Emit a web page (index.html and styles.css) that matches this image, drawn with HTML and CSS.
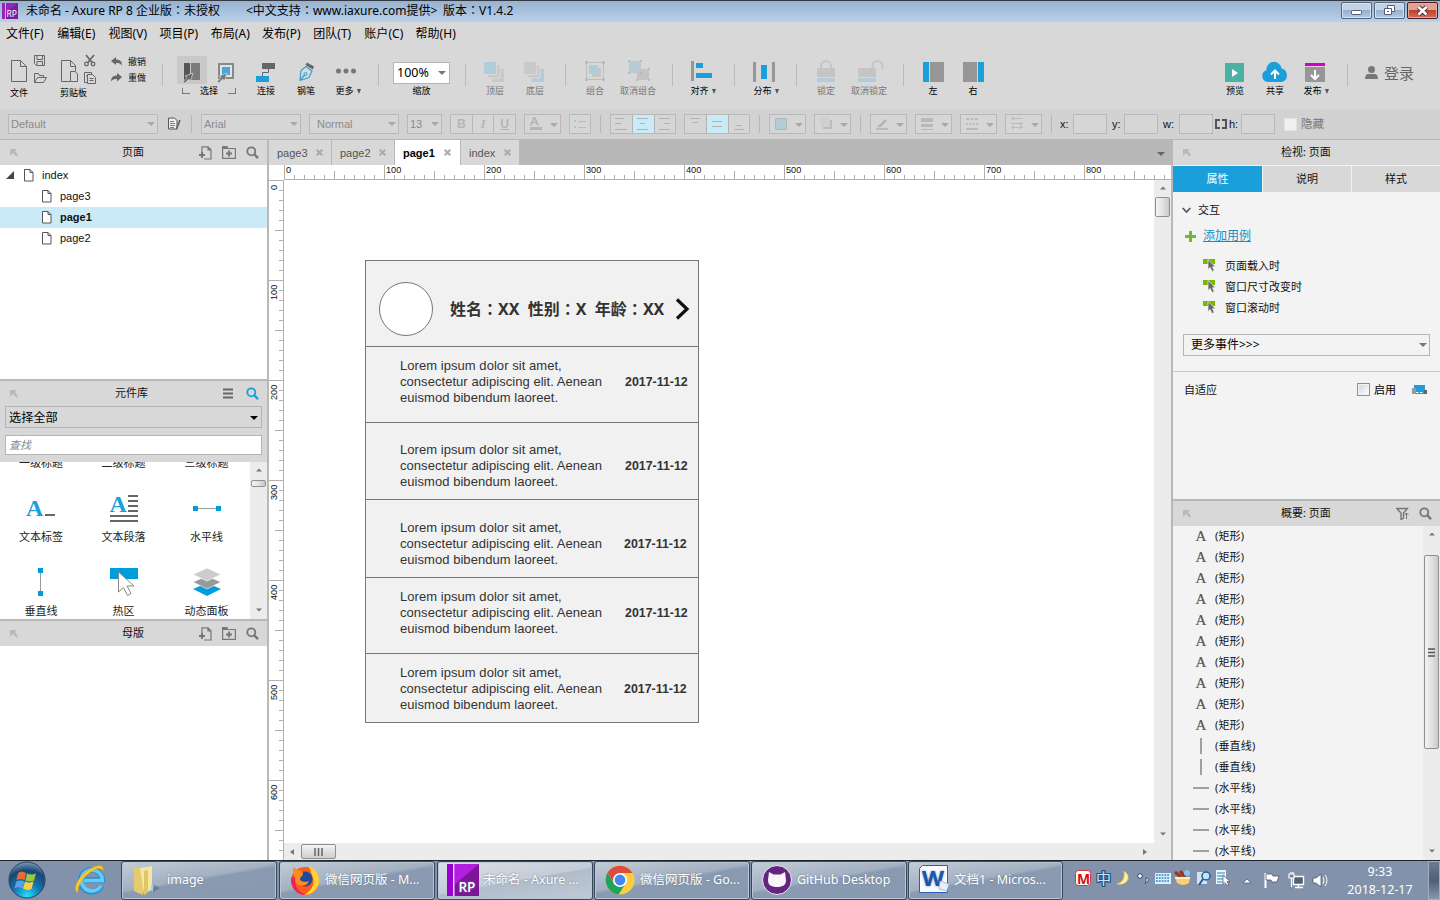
FILE: index.html
```
<!DOCTYPE html>
<html lang="zh-CN">
<head>
<meta charset="utf-8">
<title>未命名 - Axure RP 8</title>
<link rel="stylesheet" href="styles.css">
</head>
<body>
<svg class="defs" width="0" height="0">
  <symbol id="pin" viewBox="0 0 9 9"><path d="M1 8V1h7L6 3l3 4-1.500 1.500L4 5z" fill="#b9b9b9"/></symbol>
  <symbol id="doc" viewBox="0 0 10 13"><path d="M.5.5h5.500l3 3v8.500h-8.500zM6 .5v3h3" fill="#fff" stroke="#555"/></symbol>
  <symbol id="addpage" viewBox="0 0 13 14"><path d="M3 6V.8h6l3 3V13H5M9 .8v3h3" fill="none" stroke="#777" stroke-width="1.200"/><path d="M0 9h6M3 6v6" stroke="#777" stroke-width="2"/></symbol>
  <symbol id="addfolder" viewBox="0 0 15 13"><path d="M.6 2.500h12.800v9.900H.6zM.6 2V.6h4.500V2" fill="none" stroke="#777" stroke-width="1.200"/><path d="M4 7.500h6M7 4.500v6" stroke="#777" stroke-width="2"/><path d="M0 0h5v3H0z" fill="#777"/></symbol>
  <symbol id="mag" viewBox="0 0 13 13"><circle cx="5.300" cy="5.300" r="4" fill="none" stroke="currentColor" stroke-width="1.800"/><path d="M8 8l4 4.200" stroke="currentColor" stroke-width="2.400"/></symbol>
  <symbol id="evt" viewBox="0 0 13 13"><path d="M0 0h12v5H0z" fill="#76b900"/><path d="M5 .5v10l2.200-2L9 12.500l2.300-1-1.800-3.800h3z" fill="#666" stroke="#f3f3f3" stroke-width=".7"/></symbol>
  <symbol id="up" viewBox="0 0 8 4"><path d="M0 4l4-4 4 4z" fill="#777"/></symbol>
  <symbol id="down" viewBox="0 0 8 4"><path d="M0 0h8L4 4z" fill="currentColor"/></symbol>
</svg>

<div class="titlebar">
  <svg class="logo" width="16" height="16" viewBox="0 0 16 16"><path d="M0 0h16v16H0z" fill="#9726b8"/><path d="M3 0h1v16H3z" fill="#d9a5e6"/><path d="M4 9L16 0v16H4z" fill="#7d1b9d"/><text x="4.500" y="14" font-size="8.500" fill="#fff">RP</text></svg>
  <span class="title-a">未命名 - Axure RP 8 企业版<i lang="zh-TW">：</i>未授权</span>
  <span class="title-b">&lt;中文支持<i lang="zh-TW">：</i>www.iaxure.com提供&gt;</span>
  <span class="title-c">版本<i lang="zh-TW">：</i>V1.4.2</span>
  <div class="winbtns">
    <div class="winbtn"><svg width="29" height="15" viewBox="0 0 29 15"><rect x="9.500" y="7.500" width="10" height="4" rx="1" fill="#fff" stroke="#555f77"/></svg></div>
    <div class="winbtn"><svg width="29" height="15" viewBox="0 0 29 15"><path d="M12.500 2.500h7v6h-7z" fill="#fff" stroke="#555f77"/><path d="M9.500 5.500h7v6h-7z" fill="#fff" stroke="#555f77"/><path d="M12 8.500h2" stroke="#555f77"/></svg></div>
    <div class="winbtn close"><svg width="29" height="15" viewBox="0 0 29 15"><path d="M10.500 4l8 7.500M18.500 4l-8 7.500" stroke="#4b3a4c" stroke-width="4.500"/><path d="M10.500 4l8 7.500M18.500 4l-8 7.500" stroke="#fff" stroke-width="2.400"/></svg></div>
  </div>
</div>

<div class="menubar"><span>文件(F)</span><span>编辑(E)</span><span>视图(V)</span><span>项目(P)</span><span>布局(A)</span><span>发布(P)</span><span>团队(T)</span><span>账户(C)</span><span>帮助(H)</span></div>

<div class="toolbar">
  <div class="tool file"><svg width="56" height="33" viewBox="0 54 56 33"><path d="M11.500 60.500h9l6 6v15h-15zM20.500 60.500v6h6" fill="none" stroke="#666"/><path d="M34.500 55.500h10v10h-8l-2-2zM37 55.500v4h5.500v-4M37 65v-3.500h5.500V65" fill="none" stroke="#666"/><path d="M34.500 82.500v-9h4l1 2h4v2M34.500 82.500l3-5h9l-3 5z" fill="none" stroke="#666"/></svg><label>文件</label></div>
  <div class="tool clip"><svg width="48" height="33" viewBox="56 54 48 33"><path d="M70 81.500h-8.500v-21h9l5 5v6M70.500 60.500v6h5M70.500 71.500h4.500l2.500 2.500v7.500h-7z" fill="none" stroke="#666"/><path d="M86 55l6.500 8M94 55l-6.500 8" stroke="#666" stroke-width="1.700"/><circle cx="86.500" cy="64" r="1.800" fill="none" stroke="#666" stroke-width="1.300"/><circle cx="93" cy="64" r="1.800" fill="none" stroke="#666" stroke-width="1.300"/><path d="M87 82.500h-2.500v-10h7v2M87.500 74.500h5l3 3v6h-8zM89.500 78.500h4M89.500 80.500h4M86 76h1" fill="none" stroke="#666"/></svg><label>剪贴板</label></div>
  <div class="undo"><div><svg width="12" height="10" viewBox="0 0 12 10"><path d="M0 4l5-4v2.500c4 0 6 2 6 6-1.500-2-3-2.500-6-2.500V8z" fill="#666"/></svg>撤销</div><div><svg width="12" height="10" viewBox="0 0 12 10"><path d="M11 4L6 0v2.500c-4 0-6 2-6 6C1.500 6.500 3 6 6 6v2.500z" fill="#666"/></svg>重做</div></div>
  <b class="sep s0"></b>
  <div class="tool select"><svg width="78" height="31" viewBox="170 54 78 31"><path d="M177 56h30v28h-30z" fill="#c8c8c8"/><path d="M184 63h6v17h-6z" fill="#555"/><path d="M191 63h9v17h-9z" fill="#7b7b7b"/><path d="M193 73l-8 3 2.200 1.500-4.200 4 1.800 1.500 4-4 1.700 2z" fill="#666" stroke="#d8d8d8" stroke-width=".7"/><path d="M219 64h14v14h-14z" fill="#e2e2e2" stroke="#888" stroke-width="2"/><path d="M222 67h8v8h-8z" fill="#45a8d8"/><path d="M227 73l-8 3 2.200 1.500-4.200 4 1.800 1.500 4-4 1.700 2z" fill="#777" stroke="#d8d8d8" stroke-width=".7"/></svg><label><u class="bl"></u>选择<u class="br"></u></label></div>
  <div class="tool connect"><svg width="36" height="31" viewBox="248 54 36 31"><path d="M262 63h13v6h-13z" fill="#666"/><path d="M256 76h13v6h-13z" fill="#1b9fdb"/><path d="M268.500 69v3.500h-6V76" fill="none" stroke="#666"/></svg><label>连接</label></div>
  <div class="tool pen"><svg width="40" height="31" viewBox="286 54 40 31"><path d="M300 80.500l1-10 5-4 6 4.500-3 6.500zM300 80.500l5-6" fill="none" stroke="#35a2d3" stroke-width="1.200"/><circle cx="305.500" cy="74" r="1.500" fill="none" stroke="#35a2d3"/><path d="M307 62.500l7 4-1.200 3-7.300-4.500z" fill="#666"/></svg><label>钢笔</label></div>
  <div class="tool more"><svg width="40" height="31" viewBox="328 54 40 31"><circle cx="338.500" cy="71" r="2.500" fill="#777"/><circle cx="346" cy="71" r="2.500" fill="#777"/><circle cx="353.500" cy="71" r="2.500" fill="#777"/></svg><label>更多<em></em></label></div>
  <b class="sep s1"></b>
  <div class="tool zoom"><div class="zoombox"><span>100%</span><svg width="8" height="4"><use href="#down"/></svg></div><label>缩放</label></div>
  <b class="sep s2"></b>
  <div class="tool top off"><svg width="40" height="31" viewBox="475 54 40 31"><path d="M492 69h12v13h-12z" fill="#c9c9c9"/><path d="M488 65h12v13h-12z" fill="#c9c9c9" stroke="#d8d8d8"/><path d="M483.500 61.500h13v13h-13z" fill="#b0cdd9" stroke="#d8d8d8"/></svg><label>顶层</label></div>
  <div class="tool w40 off"><svg width="40" height="31" viewBox="515 54 40 31"><path d="M532 69h12v13h-12z" fill="#b0cdd9"/><path d="M528 65h12v13h-12z" fill="#c9c9c9" stroke="#d8d8d8"/><path d="M523.500 61.500h13v13h-13z" fill="#c9c9c9" stroke="#d8d8d8"/></svg><label>底层</label></div>
  <b class="sep s3"></b>
  <div class="tool group off"><svg width="40" height="31" viewBox="575 54 40 31"><path d="M586.500 62.500h17v17h-17z" fill="none" stroke="#bdbdbd"/><path d="M592 68h9v9h-9z" fill="#c5c5c5"/><path d="M589 65h9v9h-9z" fill="#b0cdd9"/><path d="M585 61h3v3h-3zM602 61h3v3h-3zM585 78h3v3h-3zM602 78h3v3h-3z" fill="#bdbdbd"/></svg><label>组合</label></div>
  <div class="tool ungroup off"><svg width="46" height="31" viewBox="615 54 46 31"><path d="M629 61h12v12h-12z" fill="#b7cbd5"/><path d="M637 69h12v11h-12z" fill="#c4c4c4"/><path d="M628 60h2v2h-2zM640 60h2v2h-2zM628 72h2v2h-2zM640 72h2v2h-2zM648 68h2v2h-2zM636 79h2v2h-2zM648 79h2v2h-2z" fill="#b5bcc0"/></svg><label>取消组合</label></div>
  <b class="sep s4"></b>
  <div class="tool align"><svg width="42" height="31" viewBox="682 54 42 31"><path d="M691 61h3v20h-3z" fill="#969696"/><path d="M696 63h7v5h-7zM696 73h16v5h-16z" fill="#1b9fdb"/></svg><label>对齐<em></em></label></div>
  <b class="sep s5"></b>
  <div class="tool dist"><svg width="42" height="31" viewBox="745 54 42 31"><path d="M753 62h3v20h-3zM772 62h3v20h-3z" fill="#969696"/><path d="M761 65h6v14h-6z" fill="#1b9fdb"/></svg><label>分布<em></em></label></div>
  <b class="sep s6"></b>
  <div class="tool lock off"><svg width="40" height="31" viewBox="806 54 40 31"><path d="M821 68v-2a5 5 0 0 1 10 0v2" fill="none" stroke="#c5c5c5" stroke-width="2"/><path d="M817 68h18v9h-18z" fill="#c5c5c5"/><path d="M817 78h18v4h-18z" fill="#b0cdd9"/></svg><label>锁定</label></div>
  <div class="tool unlock off"><svg width="46" height="31" viewBox="846 54 46 31"><path d="M872.500 68v-2a5 5 0 0 1 10 0v3" fill="none" stroke="#c5c5c5" stroke-width="2"/><path d="M858 68h18v9h-18z" fill="#c5c5c5"/><path d="M858 78h18v4h-18z" fill="#b0cdd9"/></svg><label>取消锁定</label></div>
  <b class="sep s7"></b>
  <div class="tool left"><svg width="40" height="31" viewBox="913 54 40 31"><path d="M923 62h6v20h-6z" fill="#1b9fdb"/><path d="M930 62h14v20h-14z" fill="#969696"/></svg><label>左</label></div>
  <div class="tool w40"><svg width="40" height="31" viewBox="953 54 40 31"><path d="M963 62h14v20h-14z" fill="#969696"/><path d="M978 62h6v20h-6z" fill="#1b9fdb"/></svg><label>右</label></div>
  <div class="tool preview"><svg width="40" height="31" viewBox="1215 54 40 31"><path d="M1225 63h19v19h-19z" fill="#4cb0a5"/><path d="M1232 69l6 4-6 4z" fill="#fff"/></svg><label>预览</label></div>
  <div class="tool w40"><svg width="40" height="31" viewBox="1255 54 40 31"><path d="M1268 82a6 6 0 0 1-1.500-11.700 7.500 7.500 0 0 1 15-1.800 7 7 0 0 1 .5 13.500z" fill="#1b9fdb"/><path d="M1275 79v-8M1271 74.500l4-4 4 4" fill="none" stroke="#fff" stroke-width="2"/></svg><label>共享</label></div>
  <div class="tool publish"><svg width="42" height="31" viewBox="1295 54 42 31"><path d="M1305 63h20v3h-20z" fill="#d800c0"/><path d="M1305 67h20v15h-20z" fill="#969696"/><path d="M1315 70v8M1311 75l4 4 4-4" fill="none" stroke="#fff" stroke-width="2"/></svg><label>发布<em></em></label></div>
  <b class="sep s8"></b>
  <div class="login"><svg width="13" height="14" viewBox="0 0 13 14"><circle cx="6.500" cy="3.500" r="3.500" fill="#777"/><path d="M0 13c0-3 1-5 3.500-5h6c2.500 0 3.500 2 3.500 5z" fill="#777"/></svg>登录</div>
</div>

<div class="formatbar">
  <div class="fsel f1"><span>Default</span><svg width="8" height="4"><use href="#down"/></svg></div>
  <svg class="f2" width="14" height="14" viewBox="0 0 14 14"><path d="M1.500 1h6l2.500 2.500V12h-8.500z" fill="#eee" stroke="#555"/><path d="M3 4.500h4M3 6.500h5M3 8.500h5M3 10.500h4" stroke="#1b9fdb"/><path d="M13 3L9.500 12" stroke="#666" stroke-width="1.800"/></svg>
  <b class="fsep m10"></b>
  <div class="fsel f3"><span>Arial</span><svg width="8" height="4"><use href="#down"/></svg></div>
  <div class="fsel f4"><span>Normal</span><svg width="8" height="4"><use href="#down"/></svg></div>
  <div class="fsel f5"><span>13</span><svg width="8" height="4"><use href="#down"/></svg></div>
  <div class="seg m8"><span class="bb">B</span><span class="ii">I</span><span class="uu">U</span></div>
  <svg class="fb m8" width="37" height="20" viewBox="525 115 35 18"><path d="M529.500 125.500l4-8.500h2l3.500 8.500h-2l-1-2.300h-3.500l-1 2.300z M533.200 121.700h2.300l-1.100-2.800z" fill="#b5b5b5" fill-rule="evenodd"/><path d="M530 127h12v3h-12z" fill="#b5b5b5"/><path d="M550 123h8l-4 4z" fill="#a8a8a8"/></svg>
  <svg class="fb m8" width="22" height="20" viewBox="570 115 20 18"><path d="M574 120h2v2h-2zM574 126h2v2h-2z" fill="#9ccbdd"/><path d="M578 121.500h8M578 127.500h8" stroke="#bbb"/></svg>
  <b class="fsep m9"></b>
  <svg class="fb m9" width="66" height="20" viewBox="611 115 64 18"><path d="M632.500 115h22v18h-22z" fill="#c9ebf8"/><path d="M632.500 115v18M654.500 115v18M615 118.500h9M615 123.500h6M615 129.500h12M637 118.500h11M640 123.500h5M637 129.500h11M659 118.500h11M664 123.500h6M659 129.500h11" stroke="#b3b3b3" fill="none"/></svg>
  <svg class="fb m8" width="66" height="20" viewBox="685 115 64 18"><path d="M706.500 115h22v18h-22z" fill="#c9ebf8"/><path d="M706.500 115v18M728.500 115v18M690 118.500h10M692 122.500h6M712 121.500h10M712 126.500h10M736 125.500h6M734 129.500h10" stroke="#b3b3b3" fill="none"/></svg>
  <b class="fsep m9"></b>
  <svg class="fb m9" width="37" height="20" viewBox="770 115 35 18"><path d="M775.500 118.500h11v11h-11z" fill="#b0cdd9" stroke="#b5b5b5"/><path d="M795 123h8l-4 4z" fill="#a8a8a8"/></svg>
  <svg class="fb m8" width="37" height="20" viewBox="815 115 35 18"><path d="M823 120h9v9h-9z" fill="#bdbdbd"/><path d="M820 117h10v10h-10z" fill="#d0d0d0"/><path d="M840 123h8l-4 4z" fill="#a8a8a8"/></svg>
  <b class="fsep m9"></b>
  <svg class="fb m9" width="37" height="20" viewBox="871 115 35 18"><path d="M878 126l7-7 2 2-6 6-4 .5z" fill="#b5b5b5"/><path d="M876 128h12v2h-12z" fill="#bbb"/><path d="M896 123h8l-4 4z" fill="#a8a8a8"/></svg>
  <svg class="fb m8" width="37" height="20" viewBox="916 115 35 18"><path d="M921 118h12v4h-12zM921 124h12v3h-12zM921 129h12v1h-12z" fill="#b9b9b9"/><path d="M941 123h8l-4 4z" fill="#a8a8a8"/></svg>
  <svg class="fb m8" width="37" height="20" viewBox="961 115 35 18"><path d="M966 119h12" stroke="#bbb" stroke-width="2" stroke-dasharray="3 1.500"/><path d="M966 124h12" stroke="#bbb" stroke-width="2" stroke-dasharray="2 1.300"/><path d="M966 129h12" stroke="#bbb" stroke-width="2"/><path d="M986 123h8l-4 4z" fill="#a8a8a8"/></svg>
  <svg class="fb m8" width="37" height="20" viewBox="1006 115 35 18"><path d="M1011 118.500h12M1011 123.500h12M1011 127.500h12" stroke="#bbb"/><path d="M1011 118.500l3-2v4zM1023 123.500l-3-2v4zM1011 127.500l3-2v4zM1023 127.500l-3-2v4z" fill="#bbb"/><path d="M1031 123h8l-4 4z" fill="#a8a8a8"/></svg>
  <b class="fsep m9"></b>
  <span class="xy lx">x:</span><b class="fin"></b><span class="xy ly">y:</span><b class="fin"></b><span class="xy lw">w:</span><b class="fin"></b>
  <svg class="m2" width="12" height="10" viewBox="0 0 12 10"><path d="M5 1H1v8h4M7 1h4v8H7" fill="none" stroke="#555" stroke-width="2"/></svg>
  <span class="xy lh">h:</span><b class="fin"></b><b class="hidebox"></b><span class="hidelabel">隐藏</span>
</div>

<div class="main">
  <div class="leftcol">
    <div class="phead"><svg class="pin" width="9" height="9"><use href="#pin"/></svg><span class="t-l1">页面</span><svg class="i1" width="13" height="14"><use href="#addpage"/></svg><svg class="i2" width="15" height="13"><use href="#addfolder"/></svg><svg class="i3" width="13" height="13"><use href="#mag"/></svg></div>
    <div class="tree">
      <div class="node root"><svg width="8" height="8" viewBox="0 0 8 8"><path d="M8 0v8H0z" fill="#444"/></svg><svg class="ndoc" width="10" height="13"><use href="#doc"/></svg>index</div>
      <div class="node"><svg width="10" height="13"><use href="#doc"/></svg>page3</div>
      <div class="node on"><svg width="10" height="13"><use href="#doc"/></svg>page1</div>
      <div class="node"><svg width="10" height="13"><use href="#doc"/></svg>page2</div>
    </div>
    <div class="phead line"><svg class="pin" width="9" height="9"><use href="#pin"/></svg><span class="t-l2">元件库</span><svg class="i4" width="10" height="11" viewBox="0 0 10 11"><path d="M0 1.500h10M0 5.500h10M0 9.500h10" stroke="#666" stroke-width="2"/></svg><svg class="i3 blue i5" width="13" height="13"><use href="#mag"/></svg></div>
    <div class="libctl"><div class="libsel">选择全部<svg width="8" height="4"><use href="#down"/></svg></div><div class="libfind">查找</div></div>
    <div class="lib">
      <div class="libgrid">
        <div class="cell first"><span>一级标题</span></div><div class="cell first"><span>二级标题</span></div><div class="cell first"><span>三级标题</span></div>
        <div class="cell"><svg width="32" height="32" viewBox="0 0 32 32"><text x="1" y="24" class="biga" font-size="24">A</text><path d="M20 22h10v2H20z" fill="#666"/></svg><span>文本标签</span></div>
        <div class="cell"><svg width="32" height="32" viewBox="0 0 32 32"><text x="1.500" y="20" class="biga" font-size="24">A</text><path d="M20 4h10M20 9h10M20 14h10M20 19h10M2 24h28M2 29h28" stroke="#666" stroke-width="2"/></svg><span>文本段落</span></div>
        <div class="cell"><svg width="32" height="32" viewBox="0 0 32 32"><path d="M4 16.500h24" stroke="#999"/><path d="M2 14h5v5H2zM25 14h5v5h-5z" fill="#009ddc"/></svg><span>水平线</span></div>
        <div class="cell"><svg width="32" height="32" viewBox="0 0 32 32"><path d="M15.500 4v24" stroke="#999"/><path d="M13 2h5v5h-5zM13 25h5v5h-5z" fill="#009ddc"/></svg><span>垂直线</span></div>
        <div class="cell"><svg width="32" height="32" viewBox="0 0 32 32"><path d="M2 2h28v11H2z" fill="#009ddc"/><path d="M10.500 6v20l5-4.500 4 8 3.500-2-4-7.500h7z" fill="#fff" stroke="#888"/></svg><span>热区</span></div>
        <div class="cell"><svg width="32" height="32" viewBox="0 0 32 32"><path d="M2 23l14-6 14 6-14 7z" fill="#009ddc"/><path d="M2 16l14-6 14 6-14 7z" fill="#999" stroke="#fff" stroke-width=".6"/><path d="M2 8.500L16 2l14 6.500L16 15z" fill="#ccc" stroke="#fff" stroke-width=".6"/></svg><span>动态面板</span></div>
      </div>
      <div class="vscroll"><svg class="su" width="6" height="4"><use href="#up"/></svg><b class="thumb tlib"></b><svg class="sd" width="6" height="4"><use href="#down"/></svg></div>
    </div>
    <div class="phead line"><svg class="pin" width="9" height="9"><use href="#pin"/></svg><span class="t-l1">母版</span><svg class="i1" width="13" height="14"><use href="#addpage"/></svg><svg class="i2" width="15" height="13"><use href="#addfolder"/></svg><svg class="i3" width="13" height="13"><use href="#mag"/></svg></div>
    <div class="masters"></div>
  </div>

  <div class="center">
    <div class="tabs"><div class="tab">page3<b><svg width="7" height="7" viewBox="0 0 7 7"><path d="M.7.7l5.600 5.600M6.300.7L.7 6.300" stroke="#aaa" stroke-width="2"/></svg></b></div><div class="tab">page2<b><svg width="7" height="7" viewBox="0 0 7 7"><path d="M.7.7l5.600 5.600M6.300.7L.7 6.300" stroke="#aaa" stroke-width="2"/></svg></b></div><div class="tab cur">page1<b><svg width="7" height="7" viewBox="0 0 7 7"><path d="M.7.7l5.600 5.600M6.300.7L.7 6.300" stroke="#aaa" stroke-width="2"/></svg></b></div><div class="tab">index<b><svg width="7" height="7" viewBox="0 0 7 7"><path d="M.7.7l5.600 5.600M6.300.7L.7 6.300" stroke="#aaa" stroke-width="2"/></svg></b></div><svg class="tabmore" width="8" height="4"><use href="#down"/></svg></div>
    <div class="hruler"><span>0</span><span>100</span><span>200</span><span>300</span><span>400</span><span>500</span><span>600</span><span>700</span><span>800</span></div>
    <div class="stage">
      <div class="vruler"><span>0</span><span>100</span><span>200</span><span>300</span><span>400</span><span>500</span><span>600</span></div>
      <div class="work">
        <div class="canvas">
          <div class="card">
            <div class="person"><i class="avatar"></i><strong>姓名<i lang="zh-TW">：</i>XX&nbsp; 性别<i lang="zh-TW">：</i>X&nbsp; 年龄<i lang="zh-TW">：</i>XX</strong><svg width="15" height="22" viewBox="0 0 15 22"><path d="M2 1.500L12 11 2 20.500" fill="none" stroke="#111" stroke-width="3.200"/></svg></div>
            <div class="item r1"><p>Lorem ipsum dolor sit amet,<br>consectetur adipiscing elit. Aenean<br>euismod bibendum laoreet.</p><time>2017-11-12</time></div>
            <div class="item r2"><p>Lorem ipsum dolor sit amet,<br>consectetur adipiscing elit. Aenean<br>euismod bibendum laoreet.</p><time>2017-11-12</time></div>
            <div class="item r3"><p>Lorem ipsum dolor sit amet,<br>consectetur adipiscing elit. Aenean<br>euismod bibendum laoreet.</p><time>2017-11-12</time></div>
            <div class="item r4"><p>Lorem ipsum dolor sit amet,<br>consectetur adipiscing elit. Aenean<br>euismod bibendum laoreet.</p><time>2017-11-12</time></div>
            <div class="item r5"><p>Lorem ipsum dolor sit amet,<br>consectetur adipiscing elit. Aenean<br>euismod bibendum laoreet.</p><time>2017-11-12</time></div>
          </div>
        </div>
        <div class="hscroll"><svg width="4" height="6" viewBox="0 0 4 6"><path d="M4 0v6L0 3z" fill="#777"/></svg><b class="thumb th"><svg width="9" height="8" viewBox="0 0 9 8"><path d="M1 0v8M4.500 0v8M8 0v8" stroke="#666" stroke-width="1.500"/></svg></b><svg class="hr" width="4" height="6" viewBox="0 0 4 6"><path d="M0 0v6l4-3z" fill="#777"/></svg></div>
      </div>
      <div class="vscroll tall"><svg class="su" width="6" height="4"><use href="#up"/></svg><b class="thumb tcan"></b><svg class="sd" width="6" height="4"><use href="#down"/></svg></div>
    </div>
  </div>

  <div class="rightcol">
    <div class="phead"><svg class="pin" width="9" height="9"><use href="#pin"/></svg><span class="t-r">检视: 页面</span></div>
    <div class="rtabs"><span class="sel">属性</span><span>说明</span><span>样式</span></div>
    <div class="inspector">
      <div class="sec"><svg width="9" height="7" viewBox="0 0 9 7"><path d="M.7 1l3.800 4 3.800-4" fill="none" stroke="#555" stroke-width="1.700"/></svg>交互</div>
      <div class="addcase"><svg width="11" height="11" viewBox="0 0 11 11"><path d="M0 5.500h11M5.500 0v11" stroke="#76b82a" stroke-width="3"/></svg><a>添加用例</a></div>
      <div class="ev"><svg width="13" height="13"><use href="#evt"/></svg>页面载入时</div>
      <div class="ev"><svg width="13" height="13"><use href="#evt"/></svg>窗口尺寸改变时</div>
      <div class="ev"><svg width="13" height="13"><use href="#evt"/></svg>窗口滚动时</div>
      <div class="moreev">更多事件&gt;&gt;&gt;<svg width="8" height="4"><use href="#down"/></svg></div>
      <div class="adapt"><span>自适应</span><b></b><em>启用</em><svg width="15" height="10" viewBox="0 0 15 10"><path d="M2 0h11v6H2z" fill="#1b9fdb"/><path d="M4 5h8v4H4z" fill="#1b9fdb"/><path d="M0 3h4v6H0z" fill="#999"/><path d="M12 5h3v4h-3z" fill="#666"/><path d="M4 7.500h2.500M8 7.500h2.500" stroke="#fff"/></svg></div>
    </div>
    <div class="phead line"><svg class="pin" width="9" height="9"><use href="#pin"/></svg><span class="t-r">概要: 页面</span><svg class="i6" width="13" height="13" viewBox="0 0 13 13"><path d="M.8 1.500h10.500L7.500 6v5L5 12.500V6z" fill="none" stroke="#777" stroke-width="1.400"/><path d="M10.500 12V6M8.500 8l2-2 2 2" fill="none" stroke="#777"/></svg><svg class="i3 i7" width="13" height="13"><use href="#mag"/></svg></div>
    <div class="outline">
      <div class="olist">
        <div class="o"><i>A</i>(矩形)</div><div class="o"><i>A</i>(矩形)</div><div class="o"><i>A</i>(矩形)</div><div class="o"><i>A</i>(矩形)</div><div class="o"><i>A</i>(矩形)</div><div class="o"><i>A</i>(矩形)</div><div class="o"><i>A</i>(矩形)</div><div class="o"><i>A</i>(矩形)</div><div class="o"><i>A</i>(矩形)</div><div class="o"><i>A</i>(矩形)</div>
        <div class="o"><i><b class="v"></b></i>(垂直线)</div><div class="o"><i><b class="v"></b></i>(垂直线)</div>
        <div class="o"><i><b class="h"></b></i>(水平线)</div><div class="o"><i><b class="h"></b></i>(水平线)</div><div class="o"><i><b class="h"></b></i>(水平线)</div><div class="o"><i><b class="h"></b></i>(水平线)</div>
      </div>
      <div class="vscroll"><svg class="su" width="6" height="4"><use href="#up"/></svg><b class="thumb tout"><svg width="8" height="9" viewBox="0 0 8 9"><path d="M0 1h7M0 4.500h7M0 8h7" stroke="#555" stroke-width="1.500"/></svg></b><svg class="sd" width="6" height="4"><use href="#down"/></svg></div>
    </div>
  </div>
</div>

<div class="taskbar">
  <svg class="start" width="38" height="38" viewBox="0 0 38 38"><defs><radialGradient id="orb" cx=".5" cy=".95" r=".95"><stop offset="0" stop-color="#27e0ff"/><stop offset=".4" stop-color="#1478ae"/><stop offset=".75" stop-color="#174673"/><stop offset="1" stop-color="#7c9cb8"/></radialGradient></defs><circle cx="19" cy="19" r="18" fill="url(#orb)" stroke="#2b4360"/><path d="M10 12c3-2 5-1.500 8 0l-1.500 7c-3-1.500-5-1.500-8 0z" fill="#ee6a34"/><path d="M19 12.500c3 1.500 6 1.500 9-.5l-2 7.500c-3 1.500-5.500 1-8.500 0z" fill="#9bc93f"/><path d="M8.300 20.500c3-1.500 5-1.500 8 0l-1.800 7c-3-2-5-1.500-8 0z" fill="#53a5e4"/><path d="M17 20.500c3 1.500 5.500 1.500 8.500 0l-2 7.500c-3 1.500-5.500 1-8.500-.5z" fill="#fbcf45"/></svg>
  <svg class="ie" width="32" height="32" viewBox="0 0 32 32"><path d="M27.500 21.500A11 11 0 1 1 28.500 16H10" fill="none" stroke="#2b8fd0" stroke-width="5.500"/><path d="M27 21.500A10.500 10.500 0 1 1 28.300 16.500H10" fill="none" stroke="#62ccfa" stroke-width="3.600"/><path d="M4 29C-3 26 5 10 18 4c8-4 12-3 11 3-2-3-5-3-9-1C10 11 3 22 4 29z" fill="#f9c72e" stroke="#d99b12" stroke-width=".5"/></svg>
  <div class="task t1"><svg width="32" height="32" viewBox="0 0 32 32"><path d="M22 28l7-4-6-3z" fill="#59697f" opacity=".6"/><path d="M3 3l9 2v26L3 27z" fill="#e4cb70"/><path d="M9 4l12-2v23l-8 6z" fill="#f6e7a0"/><path d="M13 7l4-1v22l-4 3z" fill="#dfc669"/><path d="M20 21h2v6h-2z" fill="#9ad3f2"/></svg><span>image</span></div>
  <div class="task t2"><svg width="32" height="32" viewBox="0 0 32 32"><circle cx="16" cy="17" r="14" fill="#ff5a1c"/><path d="M20 2c9 4 12 13 9 20-3 6-8 9-14 9 8-4 12-12 8-20z" fill="#ffd23a"/><circle cx="16" cy="15" r="7.500" fill="#184c9c"/><path d="M4 7c0-3 1-4 1-4s2 3 5 3 4 2 4 4-3 3-3 5 4 4 9 2c-2 6-10 6-13 2z" fill="#ff8a1d"/><path d="M2 14c0 10 6 17 15 17-8-3-12-9-11-18z" fill="#e92063"/></svg><span>微信网页版 - M...</span></div>
  <div class="task t3 active"><svg width="32" height="32" viewBox="0 0 32 32"><path d="M0 0h32v32H0z" fill="#9a00cf"/><path d="M8 0h24v32H8z" fill="#b51de0"/><path d="M8 20L32 0v32H8z" fill="#7e1599"/><path d="M6 0h1.500v32H6z" fill="#f0d0ff"/><text x="11.500" y="28" font-size="13.500" font-weight="600" fill="#fff" font-family="Open Sans, sans-serif">RP</text></svg><span>未命名 - Axure ...</span></div>
  <div class="task t4"><svg width="32" height="32" viewBox="0 0 32 32"><circle cx="16" cy="16" r="14.500" fill="#fdcf3e"/><path d="M3.500 8.700A14.500 14.500 0 0 1 28.500 9L16 9l-6 10z" fill="#dd4b3e"/><path d="M3.500 8.700A14.500 14.500 0 0 0 14.500 30.400L22 19l-11 2z" fill="#1da260"/><circle cx="16" cy="16" r="7" fill="#fff"/><circle cx="16" cy="16" r="5.400" fill="#4688f1"/></svg><span>微信网页版 - Go...</span></div>
  <div class="task t5"><svg width="32" height="32" viewBox="0 0 32 32"><circle cx="16" cy="16" r="14.500" fill="#642580" stroke="#eee"/><path d="M8 8l4.500 2.500h7L24 8l1 8c0 5-3 7-9 7s-9-2-9-7z" fill="#f7f5f8"/></svg><span>GitHub Desktop</span></div>
  <div class="task t6"><svg width="32" height="32" viewBox="0 0 32 32"><path d="M1.500 4.500l3-3h25v27h-28z" fill="#f8fbff" stroke="#2c61b0"/><text x="4" y="22" font-size="21" font-weight="bold" fill="#1856af" textLength="22" lengthAdjust="spacingAndGlyphs">W</text><path d="M22 17l9 3-2 7-8-2z" fill="#e6eff9" stroke="#8ba6c8" stroke-width=".7"/></svg><span>文档1 - Micros...</span></div>
  <svg class="tray" width="260" height="24" viewBox="1072 867 260 24">
    <rect x="1075.500" y="870.500" width="15" height="15" rx="3" fill="#fff" stroke="#d33"/><text x="1077" y="884" font-size="14" font-weight="bold" fill="#cf1010">M</text>
    <text x="1096" y="884" font-size="15" font-weight="bold" fill="#27547f" stroke="#27547f" stroke-width="2">中</text><text x="1096" y="884" font-size="15" fill="#c3e6ff">中</text>
    <path d="M1124 871c8 5 4 15-7 13 6-2 8-6 7-13z" fill="#fff0a0" stroke="#e8c04d" stroke-width=".7"/>
    <circle cx="1140" cy="876" r="2.300" fill="#fff" stroke="#23456b"/><path d="M1146 878a2 2 0 1 1 1 4c-1 1.500-2 1.500-2 1.500l1-2z" fill="#d0eaff" stroke="#23456b" stroke-width=".8"/>
    <path d="M1155 873h16v11h-16z" fill="#d7efff"/><path d="M1156 875h14M1156 878h14M1156 881h14" stroke="#3585c5" stroke-width="1.500" stroke-dasharray="1.800 1"/>
    <path d="M1175 877h15l-1 6q-6 4-12 0z" fill="#f7cf79"/><path d="M1175 872l6 5M1180 871l5 6" stroke="#a53419" stroke-width="3"/><circle cx="1187" cy="873" r="3" fill="#81c6ee"/><path d="M1175 878h15" stroke="#fff1b8" stroke-width="2"/>
    <path d="M1197 872h10v12h-10z" fill="#d7e3ec"/><circle cx="1206" cy="876" r="4" fill="#bfe5ff" stroke="#245c9c" stroke-width="1.500"/><path d="M1203 879l-4 6" stroke="#245c9c" stroke-width="2"/>
    <path d="M1216 870h10v14h-10z" fill="#e9f6ff"/><path d="M1217 873h8M1217 876h8M1217 879h8M1217 882h6" stroke="#2588d0"/><path d="M1223 875v9l2-1.500 2 3 1.500-1-1.500-3h3z" fill="#fff" stroke="#555" stroke-width=".7"/>
    <path d="M1243 883l4-4 4 4z" fill="#fff" stroke="#4a5669" stroke-width=".7"/>
    <path d="M1265.500 873v15" stroke="#fff" stroke-width="2"/><path d="M1266 874h6l1 2h6l-2 6h-5l-1-2h-5z" fill="#fff" stroke="#3e4859" stroke-width=".7"/>
    <path d="M1293.500 876.500h10v8h-10zM1295 887.500h8M1298.500 885v2" fill="#526078" stroke="#fff" stroke-width="1.400"/><path d="M1289 874h5v4h-5zM1291 872v2M1293 872v2M1291.500 878v9" stroke="#fff" fill="#748299" stroke-width="1.200"/>
    <path d="M1313 878h3l5-4v13l-5-4h-3z" fill="#fff" stroke="#3e4859" stroke-width=".7"/><path d="M1323 877q2 3 0 7M1325 875q4 5 0 11" fill="none" stroke="#fff"/>
  </svg>
  <div class="clock"><span>9:33</span><span>2018-12-17</span></div>
  <b class="peek"></b>
</div>
</body>
</html>
```

FILE: styles.css
```
* { box-sizing: border-box; }
html, body { margin: 0; width: 1440px; height: 900px; overflow: hidden; }
body { font: 12px/16px "Noto Sans", "Noto Sans CJK SC", sans-serif; color: #111; background: #d8d8d8; display: flex; flex-direction: column; white-space: nowrap; }
.defs { position: absolute; }
svg { display: block; flex: none; }
b, i, em { font-style: normal; }

.titlebar { height: 22px; flex: none; border-top: 1px solid #343a42; background: linear-gradient(#97b1cf, #b9d1ea); display: flex; align-items: center; color: #000; padding-bottom: 1px; }
.titlebar i, .person strong i { font-family: "Noto Sans CJK TC", sans-serif; line-height: 1; }
.logo { margin: 0 8px 1px 2px; }
.title-a { width: 220px; }
.title-b { width: 197px; }
.winbtns { margin-left: auto; display: flex; gap: 2px; padding-right: 2px; margin-top: -1px; }
.winbtn { width: 31px; height: 17px; border: 1px solid #53657f; border-radius: 2px; background: linear-gradient(#c3d4e7 45%, #96afcc 50%, #b3cbe4); box-shadow: inset 0 0 0 1px #d5e2f0; }
.winbtn.close { background: linear-gradient(#e0a193 45%, #bf4329 50%, #d2705a); border-color: #4c1a20; box-shadow: inset 0 0 0 1px #e5a99c; }

.menubar { height: 22px; flex: none; display: flex; padding: 1px 0 0 6px; align-items: center; color: #000; }
.menubar span { width: 51.200px; letter-spacing: .05px; }

.toolbar { height: 65px; flex: none; display: flex; padding-top: 10px; align-items: flex-start; }
.tool { flex: none; width: 40px; font-size: 9px; line-height: 12px; display: flex; flex-direction: column; align-items: center; color: #000; }
.tool label { display: flex; align-items: center; }
.tool em { border: 2.500px solid transparent; border-top: 5px solid #555; border-bottom: 0; margin-left: 3px; }
.tool.off { color: #777; }
.file { width: 56px; } .clip { width: 48px; }
.file label { align-self: flex-start; margin-left: 10px; }
.clip label { align-self: flex-start; margin-left: 4px; }
.undo { width: 58px; font-size: 9px; padding-left: 7px; }
.undo div { display: flex; height: 16px; align-items: center; gap: 5px; }
.sep { flex: none; width: 1px; height: 22px; margin-top: 10px; background: #bbb; }
.select { width: 78px; margin-left: 7px; }
.select u { width: 8px; height: 6px; border: solid #777; border-width: 0 0 1px 1px; margin-right: 10px; }
.select u.br { border-width: 0 1px 1px 0; margin: 0 0 0 10px; }
.connect { width: 36px; } .pen { margin-left: 2px; } .more { margin-left: 2px; }
.s1 { margin-left: 10px; }
.zoom { width: 57px; margin-left: 14px; padding-top: 8px; }
.zoombox { width: 57px; height: 22px; border: 1px solid #b5b5b5; background: #fff; margin-bottom: 1px; display: flex; align-items: center; justify-content: space-between; padding: 0 3px; font-size: 12.500px; color: #777; }
.zoombox span { color: #000; }
.s2 { margin-left: 15px; } .top { margin-left: 9px; } .s3 { margin-left: 10px; } .group { margin-left: 9px; }
.ungroup, .unlock { width: 46px; }
.s4 { margin-left: 11px; } .align, .dist, .publish { width: 42px; } .align { margin-left: 9px; }
.s5 { margin-left: 10px; } .dist { margin-left: 10px; } .s6 { margin-left: 9px; } .lock { margin-left: 9px; }
.s7 { margin-left: 11px; } .left { margin-left: 9px; } .preview { margin-left: 222px; } .s8 { margin-left: 10px; }
.login { display: flex; align-items: center; gap: 6px; margin: 8px 0 0 17px; height: 22px; font-size: 15px; color: #666; }

.formatbar { height: 31px; flex: none; background: #d2d2d2; border-bottom: 1px solid #b5b5b5; display: flex; align-items: center; padding-left: 8px; font-family: "Liberation Sans", "Noto Sans CJK SC", sans-serif; }
.fsel { height: 20px; flex: none; border: 1px solid #b8b8b8; background: #d6d6d6; display: flex; align-items: center; justify-content: space-between; padding: 0 2px; font-size: 11px; color: #8b8b8b; }
.fsel svg { color: #a8a8a8; }
.f1 { width: 150px; } .f2 { margin-left: 9px; } .f3 { width: 100px; margin-left: 9px; } .f4 { width: 90px; margin-left: 8px; padding-left: 7px; } .f5 { width: 35px; margin-left: 8px; }
.fsep { width: 1px; height: 18px; background: #b8b8b8; flex: none; }
.m2 { margin-left: 2px; } .m8 { margin-left: 8px; } .m9 { margin-left: 9px; } .m10 { margin-left: 10px; }
.seg { width: 66px; height: 20px; border: 1px solid #b8b8b8; display: flex; font-size: 12px; line-height: 18px; color: #b5b5b5; text-align: center; flex: none; background: #d6d6d6; }
.seg span { flex: 1; } .seg span + span { border-left: 1px solid #b8b8b8; }
.bb { font-weight: bold; } .ii { font: italic bold 13px/18px "Liberation Serif", serif; } .uu { text-decoration: underline; font-weight: bold; }
.fb { border: 1px solid #b8b8b8; background: #d6d6d6; }
.xy { flex: none; font-size: 11px; color: #111; }
.lx { width: 13px; margin-left: 8px; } .ly { width: 12px; margin-left: 5px; } .lw { width: 16px; margin-left: 5px; } .lh { width: 12px; margin-left: 2px; }
.fin { width: 34px; height: 20px; border: 1px solid #b8b8b8; background: #d6d6d6; flex: none; }
.hidebox { width: 13px; height: 13px; background: #f0f0f0; border: 1px solid #e2e2e2; margin-left: 9px; flex: none; }
.hidelabel { margin-left: 4px; font-size: 11.500px; color: #777; }

.main { height: 720px; flex: none; display: flex; }
.leftcol { width: 269px; flex: none; border-right: 2px solid #b8b8b8; display: flex; flex-direction: column; font-size: 11px; }
.phead { height: 25px; flex: none; background: #d8d8d8; display: flex; align-items: center; font-size: 11px; color: #111; }
.phead span { padding-bottom: 2px; }
.phead.line { height: 27px; border-top: 2px solid #b8b8b8; }
.pin { margin: 0 0 1px 9px; }
.i3 { color: #777; margin: 0 0 1px 9px; } .i3.blue { color: #1b9fdb; }
.t-l1 { width: 77px; margin-left: 104px; } .t-l2 { width: 107px; margin-left: 97px; } .t-r { width: 115px; margin-left: 90px; }
.i2 { margin-left: 10px; } .i3.i5 { margin-left: 13px; } .i4 { margin-left: 1px; }
.i3.i7 { margin-left: 10px; }
.tree { height: 214px; flex: none; background: #fff; font-family: "Liberation Sans", sans-serif; }
.node { height: 21px; display: flex; align-items: center; gap: 8px; padding: 0 0 1px 42px; }
.node.root { padding-left: 6px; gap: 8px; } .node .ndoc { margin-left: 2px; }
.node.on { background: #caeaf7; font-weight: bold; }
.libctl { height: 56px; flex: none; padding: 0 5px; }
.libsel { height: 22px; border: 1px solid #b5b5b5; display: flex; justify-content: space-between; align-items: center; padding: 1px 3px 0; font-size: 12.200px; color: #000; }
.libfind { height: 20px; margin-top: 7px; border: 1px solid #b5b5b5; background: #fff; color: #888; font-style: italic; padding-left: 3px; line-height: 18px; }
.lib { height: 157px; flex: none; display: flex; background: #fff; overflow: hidden; }
.libgrid { width: 250px; padding-right: 2px; display: grid; grid-template-columns: 82px 83px 83px; grid-template-rows: 29px 74px 74px; color: #222; }
.cell { display: flex; flex-direction: column; align-items: center; }
.cell span { margin-top: 5px; }
.cell.first span { margin-top: -7px; }
.cell svg { margin-top: 1px; }
.biga { font-family: "Liberation Serif", serif; font-weight: bold; fill: #1b9fdb; }
.vscroll { width: 17px; flex: none; background: #ececec; display: flex; flex-direction: column; align-items: center; color: #777; }
.su { margin-top: 6px; } .sd { margin: auto 0 7px; }
.thumb { border: 1px solid #909090; border-radius: 2px; background: linear-gradient(90deg, #f4f4f4, #e2e2e2 50%, #c8c9cc); display: flex; align-items: center; justify-content: center; flex: none; }
.tlib { width: 15px; height: 7px; margin-top: 8px; }
.masters { flex: 1; background: #fff; }

.center { width: 902px; flex: none; background: #fff; display: flex; flex-direction: column; }
.tabs { height: 25px; flex: none; background: #b8b8b8; display: flex; font: 11px/26px "Liberation Sans", sans-serif; color: #555; }
.tab { width: 62px; background: #d8d8d8; margin-right: 1px; padding-left: 8px; display: flex; justify-content: space-between; align-items: center; }
.tab b { width: 15px; }
.tab.cur { background: #fff; color: #000; font-weight: bold; width: 65px; }
.tab.cur b { width: 16px; }
.tab:nth-child(4) { width: 58px; } .tab:nth-child(4) b { width: 15px; }
.tabmore { margin: 12px 6px 0 auto; color: #666; }
.hruler { height: 15px; flex: none; margin-left: 15px; border-bottom: 1px solid #b0b0b0; display: flex; overflow: hidden; font: 9.200px/11px "Liberation Sans", sans-serif; background: repeating-linear-gradient(90deg, #b0b0b0 0 1px, transparent 1px 100px), repeating-linear-gradient(90deg, #b0b0b0 0 1px, transparent 1px 50px) 0 6px / 100% 9px no-repeat, repeating-linear-gradient(90deg, #b0b0b0 0 1px, transparent 1px 10px) 0 10px / 100% 5px no-repeat; }
.hruler span { width: 100px; flex: none; padding-left: 2px; }
.stage { height: 680px; display: flex; }
.vruler { width: 15px; flex: none; border-right: 1px solid #b0b0b0; overflow: hidden; font: 9.200px/11px "Liberation Sans", sans-serif; background: repeating-linear-gradient(#b0b0b0 0 1px, transparent 1px 100px), repeating-linear-gradient(#b0b0b0 0 1px, transparent 1px 50px) 6px 0 / 9px 100% no-repeat, repeating-linear-gradient(#b0b0b0 0 1px, transparent 1px 10px) 10px 0 / 5px 100% no-repeat; }
.vruler span { display: block; height: 100px; width: 12px; writing-mode: vertical-rl; transform: rotate(180deg); text-align: right; padding-bottom: 5px; }
.work { width: 870px; flex: none; display: flex; flex-direction: column; }
.canvas { height: 663px; padding: 80px 0 0 81px; background: #fff; }
.card { width: 334px; height: 463px; border: 1px solid #777; background: #f1f1f1; color: #333; }
.person { height: 85px; display: flex; padding-left: 13px; }
.avatar { width: 54px; height: 54px; border: 1px solid #777; border-radius: 50%; background: #fff; margin-top: 21px; flex: none; }
.person strong { width: 216px; margin: 36px 0 0 17px; font-size: 16px; line-height: 24px; flex: none; }
.person svg { margin: 37px 0 0 9px; }
.item { border-top: 1px solid #777; display: flex; font: 13px/16px "Liberation Sans", sans-serif; padding-left: 34px; }
.item p { margin: 0; width: 225px; letter-spacing: .05px; }
.item time { font-weight: bold; padding-top: 16px; font-size: 12.400px; }
.r1 { height: 76px; padding-top: 11px; } .r2 { height: 77px; padding-top: 19px; } .r3 { height: 78px; padding-top: 20px; } .r4 { height: 76px; padding-top: 11px; } .r5 { height: 69px; padding-top: 11px; }
.r3 p, .r5 p { width: 224px; }
.hscroll { height: 17px; background: #ececec; display: flex; align-items: center; padding: 0 7px 0 6px; }
.th { width: 35px; height: 15px; margin-left: 7px; background: linear-gradient(#f4f4f4, #e0e0e0 50%, #cfcfcf); }
.hr { margin-left: auto; }
.tall { height: 680px; padding-bottom: 17px; }
.tcan { width: 15px; height: 20px; margin-top: 7px; }

.rightcol { width: 269px; flex: none; border-left: 2px solid #b8b8b8; background: #f3f3f3; display: flex; flex-direction: column; font-size: 11px; }
.rtabs { height: 27px; flex: none; padding-top: 1px; display: grid; grid-template-columns: 89px 88px 88px; gap: 1px; text-align: center; line-height: 26px; }
.rtabs span { background: #d8d8d8; } .rtabs .sel { background: #1b9fdb; color: #fff; }
.inspector { height: 307px; flex: none; padding-top: 10px; }
.sec { height: 16px; display: flex; align-items: center; gap: 7px; padding-left: 9px; }
.addcase { height: 18px; margin-top: 9px; display: flex; align-items: center; gap: 7px; padding-left: 12px; font-size: 12px; }
.addcase a { color: #168ec4; text-decoration: underline; }
.ev { height: 21px; display: flex; align-items: center; gap: 9px; padding-left: 30px; }
.addcase + .ev { margin-top: 10px; }
.moreev { margin: 16px 10px 0; height: 22px; border: 1px solid #b5b5b5; display: flex; align-items: center; justify-content: space-between; padding: 0 2px 0 7px; font-size: 12px; color: #000; }
.moreev svg { color: #777; }
.adapt { margin-top: 15px; border-top: 1px solid #c8c8c8; height: 36px; display: flex; align-items: center; padding-left: 11px; }
.adapt span { width: 173px; }
.adapt b { width: 13px; height: 13px; border: 1px solid #8e8f8f; background: linear-gradient(135deg, #cfd3da, #fff); box-shadow: inset 0 0 0 1px #f4f4f4; }
.adapt em { margin: 0 16px 0 4px; color: #000; }
.outline { height: 334px; display: flex; overflow: hidden; }
.olist { width: 250px; flex: none; }
.o { height: 21px; display: flex; align-items: center; padding: 0 0 2px 20px; letter-spacing: .15px; }
.o i { width: 16px; margin-right: 6px; font: 15px/21px "Liberation Serif", serif; color: #555; display: flex; justify-content: center; align-items: center; padding-top: 1px; -webkit-text-stroke: .2px #555; }
.o b { background: #a0a0a0; } .o .v { width: 2px; height: 16px; } .o .h { width: 16px; height: 2px; }
.tout { width: 15px; height: 194px; margin-top: 19px; }

.taskbar { height: 40px; flex: none; border-top: 1px solid #20242c; background: #8192aa; display: flex; font-size: 12.500px; color: #fff; }
.start { margin: 0 0 0 8px; } .ie { margin: 3px 0 0 28px; }
.task { width: 156px; height: 39px; flex: none; border: 1px solid #39475a; border-radius: 3px; box-shadow: inset 0 0 0 1px #b9c6d6; background: linear-gradient(170deg, #c3ccd8 0, #a3b0c1 45%, #8a9bb1 50%, #8799b0); display: flex; align-items: center; padding: 0 0 1px 9px; gap: 4px; text-shadow: 0 0 2px #68788e; }
.t1 { margin-left: 15px; } .t6 { width: 155px; }
.t2, .t3 { margin-left: 2px; } .t4, .t5, .t6 { margin-left: 1px; }
.active { background: linear-gradient(170deg, #dde2e9, #c3ccd7 50%, #b1bdcb 52%, #c0cad5); }
.tray { margin: 6px 0 0 9px; }
.clock { width: 96px; flex: none; display: flex; flex-direction: column; align-items: center; line-height: 18px; padding-top: 2px; font-size: 12.500px; }
.peek { margin-left: auto; width: 14px; height: 39px; border: 1px solid #9fb0c5; background: linear-gradient(#6b7b91, #4f5e75 50%, #8797ac); }
```
